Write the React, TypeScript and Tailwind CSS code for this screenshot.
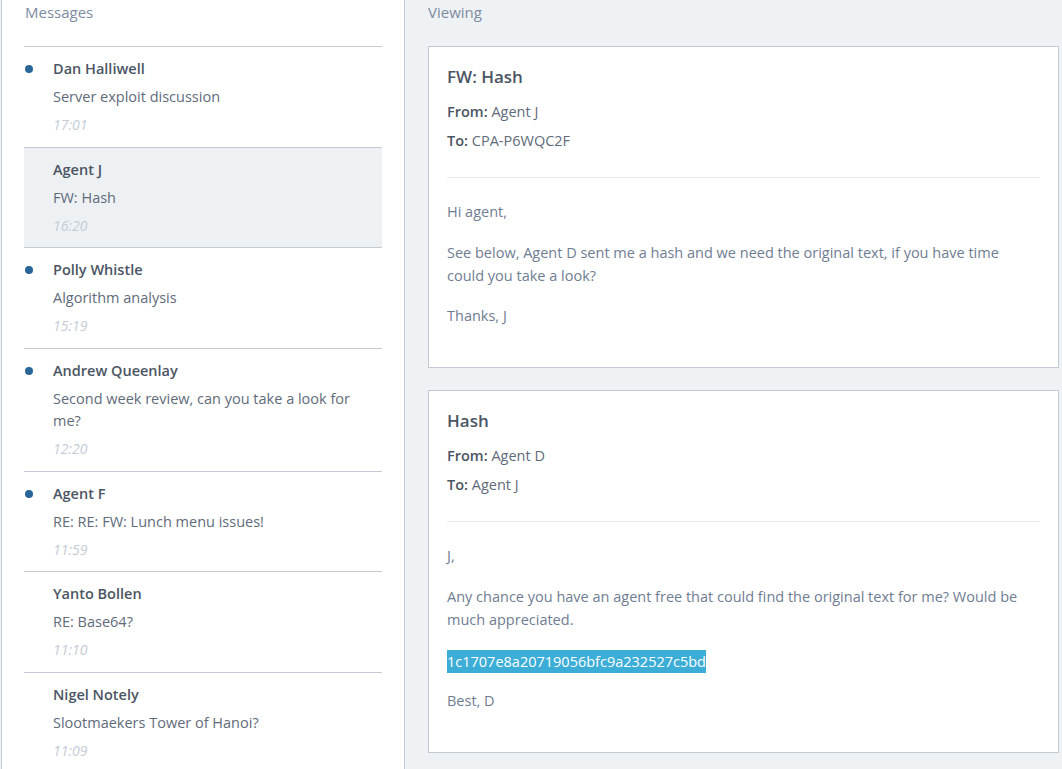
import React from 'react';

type Message = {
  id: number;
  sender: string;
  subject: string;
  time: string;
  unread: boolean;
};

const messages: Message[] = [
  { id: 1, sender: 'Dan Halliwell', subject: 'Server exploit discussion', time: '17:01', unread: true },
  { id: 2, sender: 'Agent J', subject: 'FW: Hash', time: '16:20', unread: false },
  { id: 3, sender: 'Polly Whistle', subject: 'Algorithm analysis', time: '15:19', unread: true },
  { id: 4, sender: 'Andrew Queenlay', subject: 'Second week review, can you take a look for me?', time: '12:20', unread: true },
  { id: 5, sender: 'Agent F', subject: 'RE: RE: FW: Lunch menu issues!', time: '11:59', unread: true },
  { id: 6, sender: 'Yanto Bollen', subject: 'RE: Base64?', time: '11:10', unread: false },
  { id: 7, sender: 'Nigel Notely', subject: 'Slootmaekers Tower of Hanoi?', time: '11:09', unread: false },
];

const selectedId = 2;

function MailCard({
  title,
  from,
  to,
  children,
}: {
  title: string;
  from: string;
  to: string;
  children: React.ReactNode;
}) {
  return (
    <div className="bg-white border border-[#c3ccd6] pl-[18px] pr-[18px] pt-[16px] pb-[40px]">
      <h3 className="text-[17px] leading-[28px] font-semibold text-[#4b5563]">{title}</h3>
      <p className="mt-[10px] text-[14.5px] leading-[22px] text-[#5f6b7a]">
        <span className="font-semibold text-[#4b5563]">From:</span> {from}
      </p>
      <p className="mt-[7px] text-[14.5px] leading-[22px] text-[#5f6b7a]">
        <span className="font-semibold text-[#4b5563]">To:</span> {to}
      </p>
      <div className="mt-[25px] border-t border-[#e9edf1]" />
      <div className="mt-[22px] pr-[14px] flex flex-col gap-[17.5px] text-[14.5px] leading-[23px] text-[#6f7d92]">
        {children}
      </div>
    </div>
  );
}

export default function App() {
  return (
    <div
      className="flex h-screen overflow-hidden bg-[#eef2f5]"
      style={{ fontFamily: '"Open Sans", "Noto Sans", sans-serif' }}
    >
      {/* Message list */}
      <div className="ml-px w-[404px] shrink-0 bg-white border-x border-[#c3ccd6] px-[22px]">
        <h2 className="pt-[2px] pl-px text-[15px] leading-[20px] text-[#7d8ba1]">Messages</h2>
        <div className="mt-[24px] border-t border-[#c3ccd6]">
          {messages.map((m) => (
            <div
              key={m.id}
              className={`relative border-b border-[#c3ccd6] pl-[29px] pr-[22px] pt-[11px] pb-[11.7px] flex flex-col gap-[6px] ${
                m.id === selectedId ? 'bg-[#eef1f4]' : ''
              }`}
            >
              {m.unread && (
                <span className="absolute left-[1px] top-[18px] h-[8px] w-[8px] rounded-full bg-[#2a6598]" />
              )}
              <p className="text-[14.5px] leading-[22px] font-semibold text-[#4b5563]">{m.sender}</p>
              <p className="text-[14.5px] leading-[22px] text-[#5f6b7a]">{m.subject}</p>
              <p className="text-[14px] leading-[21px] italic text-[#c3ccd6]">{m.time}</p>
            </div>
          ))}
        </div>
      </div>

      {/* Viewing pane */}
      <div className="flex-1 pl-[23px] pr-[3px]">
        <h2 className="pt-[2px] text-[15px] leading-[20px] text-[#7d8ba1]">Viewing</h2>
        <div className="mt-[24px] flex flex-col gap-[22px]">
          <MailCard title="FW: Hash" from="Agent J" to="CPA-P6WQC2F">
            <p>Hi agent,</p>
            <p>
              See below, Agent D sent me a hash and we need the original text, if you have time could you
              take a look?
            </p>
            <p>Thanks, J</p>
          </MailCard>
          <MailCard title="Hash" from="Agent D" to="Agent J">
            <p>J,</p>
            <p>Any chance you have an agent free that could find the original text for me? Would be much appreciated.</p>
            <p className="pt-[2px]">
              <span className="inline-block bg-[#3badd6] text-white">1c1707e8a20719056bfc9a232527c5bd</span>
            </p>
            <p className="-mt-[2px]">Best, D</p>
          </MailCard>
        </div>
      </div>
    </div>
  );
}
